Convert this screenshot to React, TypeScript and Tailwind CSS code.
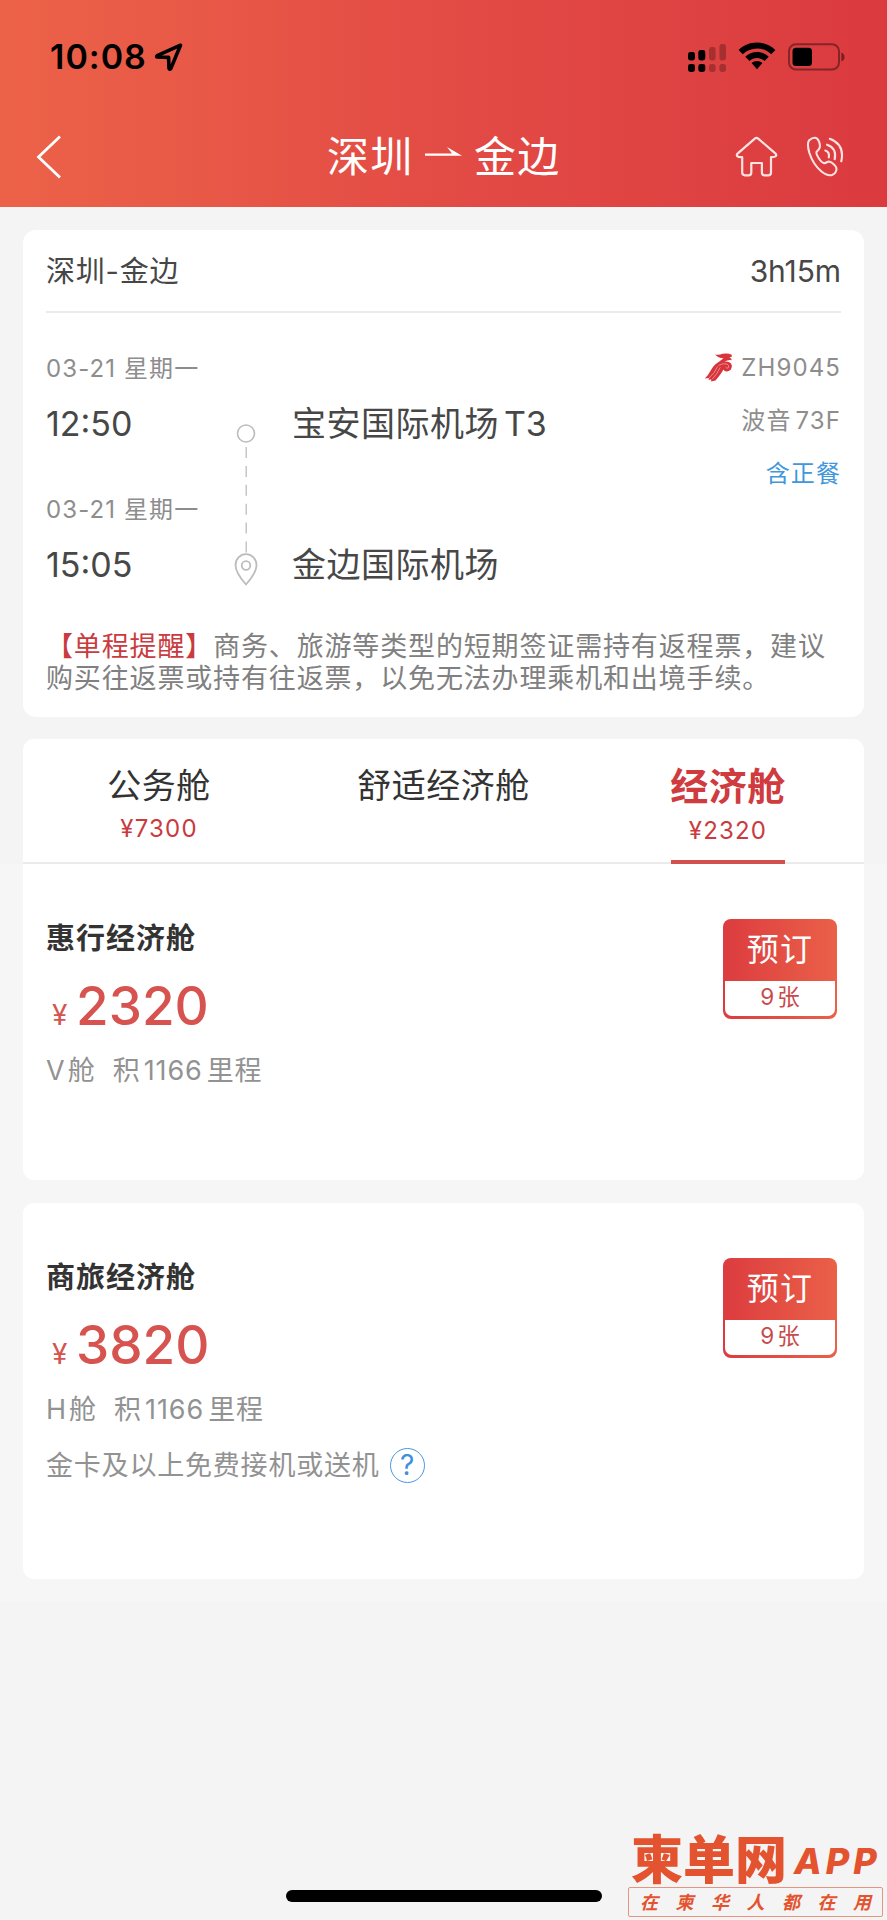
import { useState } from "react";

const cabins = [
  { name: "公务舱", price: "¥7300" },
  { name: "舒适经济舱", price: "" },
  { name: "经济舱", price: "¥2320" },
];

function StatusBar() {
  return (
    <div className="flex h-[114px] items-center pr-[42px] pl-[50px] text-black">
      <span className="w-[98px] text-[34px] leading-none font-semibold tracking-[1px]">10:08</span>
      <svg className="ml-[6px]" width="30" height="30" viewBox="0 0 30 30" fill="none" stroke="currentColor" strokeWidth="3.6" strokeLinejoin="round">
        <path d="M26.5 3.2 L3.2 13.6 Q2 15 3.4 15 L14.6 15.4 L15 26.4 Q15.6 28 16.8 26.6 Z" />
      </svg>
      <svg className="mt-[1px] ml-auto" width="40" height="30" viewBox="0 0 40 30">
        <rect x="1" y="9" width="7" height="8.5" rx="2.4" />
        <rect x="11.3" y="7" width="7" height="10.5" rx="2.4" />
        <rect x="22" y="4" width="6.6" height="13.5" rx="2.4" fillOpacity="0.25" />
        <rect x="32.4" y="1" width="6.6" height="16.5" rx="2.4" fillOpacity="0.25" />
        <rect x="1" y="21" width="7" height="8" rx="2.4" />
        <rect x="11.3" y="21" width="7" height="8" rx="2.4" />
        <rect x="22" y="21" width="6.6" height="8" rx="2.4" fillOpacity="0.25" />
        <rect x="32.4" y="21" width="6.6" height="8" rx="2.4" fillOpacity="0.25" />
      </svg>
      <svg className="-mt-[2px] ml-[11px]" width="38" height="28" viewBox="0 0 38 28">
        <path d="M19 0.5 C26 0.5 32.5 3.2 37.4 8 L33.2 12.3 C29.4 8.6 24.4 6.5 19 6.5 C13.6 6.5 8.6 8.6 4.8 12.3 L0.6 8 C5.5 3.2 12 0.5 19 0.5 Z" />
        <path d="M19 10 C23.4 10 27.6 11.7 30.8 14.7 L26.5 19 C24.4 17.1 21.8 16 19 16 C16.2 16 13.6 17.1 11.5 19 L7.2 14.7 C10.4 11.7 14.6 10 19 10 Z" />
        <path d="M19 19 C21.1 19 23 19.7 24.4 21.1 L19 27.3 L13.6 21.1 C15 19.7 16.9 19 19 19 Z" />
      </svg>
      <svg className="-mt-[1px] ml-[12px]" width="57" height="28" viewBox="0 0 57 28">
        <rect x="1" y="1.2" width="50" height="25.4" rx="7" fill="none" stroke="#000" strokeOpacity="0.4" strokeWidth="2" />
        <rect x="4.5" y="4.8" width="19.5" height="18.2" rx="3.5" />
        <path d="M53.3 9.5 Q56.8 11 56.5 14 Q56.8 17 53.3 18.5 Z" fillOpacity="0.45" />
      </svg>
    </div>
  );
}

function NavBar() {
  return (
    <div className="flex h-[84px] items-center pr-[43px] pl-[35px] text-white">
      <svg className="mt-[1px]" width="28" height="44" viewBox="0 0 28 44" fill="none" stroke="currentColor" strokeWidth="2.8">
        <path d="M25 1.5 L3.5 22 L25 42.5" />
      </svg>
      <div className="mt-[2px] ml-[264px] flex items-center text-[42px] leading-none font-[390] tracking-[1.2px]">
        <span className="w-[98px]">深圳</span>
        <svg className="-mt-[11px] mr-[12px]" width="37" height="10" viewBox="0 0 37 10" fill="currentColor">
          <path d="M0 6.6 H27 L22 0 L37 8.8 H0 Z" />
        </svg>
        <span>金边</span>
      </div>
      <svg className="mt-[1px] ml-auto" width="43" height="41" viewBox="0 0 43 41" fill="none" stroke="#ffe3e1" strokeWidth="2.2" strokeLinejoin="round">
        <path d="M21.5 1.8 Q22.3 1.8 23.2 2.6 L40.3 17.3 Q41.8 18.8 40.8 20.2 Q40 21.3 36 21.2 V36.5 Q36 39.3 33.2 39.3 H29.5 Q26.9 39.3 26.9 36.5 V27 H16.3 V36.5 Q16.3 39.3 13.6 39.3 H9.9 Q7.2 39.3 7.2 36.5 V21.2 Q3.2 21.3 2.3 20.2 Q1.2 18.8 2.8 17.3 L19.8 2.6 Q20.7 1.8 21.5 1.8 Z" />
      </svg>
      <svg className="mt-[1px] ml-[28px]" width="38" height="41" viewBox="0 0 38 41" fill="none" stroke="#ffe3e1" strokeWidth="2.1" strokeLinecap="round" strokeLinejoin="round">
        <path d="M3.2 4.2 Q6.3 1.5 9.3 1.8 Q11.8 2.2 13.2 6 Q14.6 10.2 13.3 12.5 Q12.4 14.2 10.6 15.8 Q9.7 17.7 12.6 22 Q15.7 26.8 18.1 27.2 Q19.4 27.2 21.3 26 Q23.5 24.9 26.2 27 Q30.6 30.6 30.5 33 Q30.2 37.5 26 39 Q21.2 40.2 15.2 35.2 Q7.2 28.5 3.4 17 Q0.6 7.8 3.2 4.2 Z" />
        <path d="M19.3 14.6 Q23.8 16 22.8 21.4" />
        <path d="M21 8.7 Q31 12 28.7 23.3" />
        <path d="M23.8 2.8 Q39 8.5 35.3 25.3" />
      </svg>
    </div>
  );
}

function AirlineLogo() {
  return (
    <svg className="mr-[8px]" width="29" height="29" viewBox="0 0 29 29">
      <path d="M11 1.5 Q15 2.4 18.5 0.8 Q24 -0.3 27.6 1.8 L28 3.4 L25.4 4.4 Q27.8 5.4 27.6 7.2 Q24 6.6 20.4 8.6 Q26.5 8 27.8 12.2 Q28.2 17.4 23.2 18.4 Q20.3 18.6 19.5 16.5 Q17 21 11.5 27.6 L7 28.4 L7.4 26.4 L4.5 26.8 L5 25 L0.8 25.4 Q4.2 22.5 7 17 Q10.4 11.2 15 8.8 L19.5 5.2 Q14 5.2 11 1.5 Z" fill="#d8343c" />
      <path d="M5 25 Q11 20 13.5 13.5 M8.4 26 Q13.3 21 16.2 14.3 M14.5 12.5 Q19 9.8 23 11 Q25.3 12 24.4 14.6 Q22.9 16 21.7 14.4" fill="none" stroke="#f0a0a3" strokeWidth="0.8" />
    </svg>
  );
}

function RouteLine() {
  return (
    <svg width="24" height="164" viewBox="0 0 24 164" fill="none" stroke="#bdbdbd">
      <circle cx="12" cy="10.5" r="8.5" strokeWidth="1.6" />
      <path d="M12.2 24 V132" strokeWidth="1.3" strokeDasharray="11 7.9" />
      <path d="M12 161.5 C8 157 1.5 149 1.5 142 A10.5 10.8 0 0 1 22.5 142 C22.5 149 16 157 12 161.5 Z" strokeWidth="1.8" />
      <circle cx="12" cy="142.5" r="4.3" strokeWidth="1.8" />
    </svg>
  );
}

function FlightCard() {
  return (
    <section className="mx-[23px] mt-[23px] h-[487px] rounded-[13px] bg-white px-[23px] text-[#474747]">
      <div className="flex h-[83px] items-center justify-between border-b-2 border-[#ebebeb] text-[29px] leading-none font-[390]">
        <span className="mt-[1px] tracking-[0.8px]">深圳-金边</span>
        <span className="text-[30px] -tracking-[0.1px]">3h15m</span>
      </div>
      <div className="flex h-[299px]">
        <div className="w-[188px] pt-[42px]">
          <div className="h-[28px] text-[24px] leading-[28px] font-[390] tracking-[1.1px] text-[#8d8d8d]">03-21 星期一</div>
          <div className="mt-[21px] h-[40px] text-[34px] leading-[40px]">12:50</div>
          <div className="mt-[52px] h-[28px] text-[24px] leading-[28px] font-[390] tracking-[1.1px] text-[#8d8d8d]">03-21 星期一</div>
          <div className="mt-[21px] h-[40px] text-[34px] leading-[40px]">15:05</div>
        </div>
        <div className="pt-[110px]">
          <RouteLine />
        </div>
        <div className="ml-[34px] pt-[91px] text-[34px] leading-[40px] font-[390] tracking-[0.5px]">
          <div>
            宝安国际机场<span className="ml-[5px] -tracking-[0.3px]">T3</span>
          </div>
          <div className="mt-[101px]">金边国际机场</div>
        </div>
        <div className="ml-auto flex flex-col items-end gap-[25px] pt-[40px] text-[24px] leading-[28px] font-[390] tracking-[1.1px] text-[#8d8d8d]">
          <div className="flex items-center">
            <AirlineLogo />
            ZH9045
          </div>
          <div>
            波音<span className="ml-[4px]">73F</span>
          </div>
          <div className="text-[#3f97dc]">含正餐</div>
        </div>
      </div>
      <p className="pt-[19px] text-[27px] leading-[32.4px] font-[390] tracking-[0.85px] text-[#808080]">
        <span className="text-[#c93b3e]">
          【<span className="font-normal">单程提醒</span>】
        </span>
        商务、旅游等类型的短期签证需持有返程票，建议
        <br />
        购买往返票或持有往返票，以免无法办理乘机和出境手续。
      </p>
    </section>
  );
}

function BookButton() {
  return (
    <button className="flex h-[100px] w-[114px] flex-col rounded-[8px] bg-linear-to-r from-[#dc3b3f] to-[#ea6048] px-[2px] pb-[3px] leading-none">
      <span className="flex h-[62px] w-full items-center justify-center text-[32px] font-[390] tracking-[1.2px] text-white">预订</span>
      <span className="flex w-full flex-1 items-center justify-center rounded-b-[7px] bg-white pb-[3px] text-[22.5px] font-[390] text-[#c94a4c]">
        9<span className="ml-[3px]">张</span>
      </span>
    </button>
  );
}

type FareProps = { title: string; price: string; code: string; extra?: string };

function Fare({ title, price, code, extra }: FareProps) {
  return (
    <div className="flex justify-between pr-[27px] pl-[23px]">
      <div className="pt-[58px]">
        <h3 className="h-[34px] text-[29px] leading-[34px] font-bold tracking-[1px] text-[#333333]">{title}</h3>
        <div className="mt-[18px] flex h-[64px] items-baseline pl-[6px] text-[#d6534f]">
          <span className="w-[24px] text-[28px] leading-none">¥</span>
          <span className="text-[53px] leading-[64px] font-medium">{price}</span>
        </div>
        <div className="mt-[16px] flex h-[32px] items-center text-[27px] leading-none font-[390] text-[#929292]">
          {code}
          <span className="ml-[3px]">舱</span>
          <span className="ml-[18px]">积</span>
          <span className="ml-[4px] tracking-[0.9px]">1166</span>
          <span className="ml-[4px] tracking-[0.8px]">里程</span>
        </div>
        {extra && (
          <div className="mt-[22px] flex h-[36px] items-center text-[27px] leading-none font-[390] tracking-[0.8px] text-[#929292]">
            {extra}
            <span className="ml-[10px] flex size-[35px] items-center justify-center rounded-full border-[1.5px] border-[#4b96e0] text-[28px] tracking-normal text-[#3f8fe0]">?</span>
          </div>
        )}
      </div>
      <div className="pt-[55px]">
        <BookButton />
      </div>
    </div>
  );
}

function Watermark() {
  return (
    <div className="absolute right-[4px] bottom-[3px] w-[255px] text-[#e4532f]">
      <div className="flex h-[56px] items-center">
        <span className="mt-[4px] ml-[3px] text-[52px] leading-none font-black">柬单网</span>
        <span className="mt-[4px] ml-[7px] text-[36px] leading-none font-extrabold tracking-[4px] italic">APP</span>
      </div>
      <div className="flex h-[30px] items-center justify-between rounded-[2px] border border-[#e39580] px-[11px] pt-[2px] text-[18px] leading-none font-bold italic">
        {Array.from("在柬华人都在用").map((ch, i) => (
          <span key={i}>{ch}</span>
        ))}
      </div>
    </div>
  );
}

export default function App() {
  const [active, setActive] = useState(2);

  return (
    <div className="relative flex h-[1920px] w-[887px] flex-col overflow-hidden bg-[#f4f4f4] font-['Inter','Noto_Sans_CJK_SC',sans-serif]">
      <header className="h-[207px] shrink-0 bg-linear-to-r from-[#ec6248] via-[#e34b45] to-[#db3a3f]">
        <StatusBar />
        <NavBar />
      </header>

      <FlightCard />

      <div className="mx-[23px] mt-[22px] flex h-[125px] shrink-0 justify-between rounded-t-[11px] border-b-2 border-[#ebebeb] bg-white px-[79px]">
        {cabins.map((cabin, i) => (
          <button
            key={cabin.name}
            onClick={() => setActive(i)}
            className={`-mb-[2px] flex w-[114px] flex-col items-center pt-[27px] whitespace-nowrap ${
              i === active ? "border-b-4 border-[#d2504e]" : ""
            }`}
          >
            <span
              className={
                i === active
                  ? "h-[40px] text-[38px] leading-[40px] font-bold tracking-[0.5px] text-[#cf3b3e]"
                  : "h-[40px] text-[34px] leading-[40px] font-[390] tracking-[0.5px] text-[#333333]"
              }
            >
              {cabin.name}
            </span>
            <span className={`text-[24px] leading-[28px] font-[390] tracking-[1.2px] text-[#c93b3e] ${i === active ? "mt-[11px]" : "mt-[9px]"}`}>
              {cabin.price}
            </span>
          </button>
        ))}
      </div>

      <main className="h-[738px] shrink-0 bg-[#f6f6f6] px-[23px]">
        <div className="h-[316px] rounded-b-[11px] bg-white">
          <Fare title="惠行经济舱" price="2320" code="V" />
        </div>
        <div className="mt-[23px] h-[376px] rounded-[11px] bg-white">
          <Fare title="商旅经济舱" price="3820" code="H" extra="金卡及以上免费接机或送机" />
        </div>
      </main>

      <div className="mx-auto mt-auto mb-[18px] h-[12px] w-[316px] rounded-full bg-black" />
      <Watermark />
    </div>
  );
}
